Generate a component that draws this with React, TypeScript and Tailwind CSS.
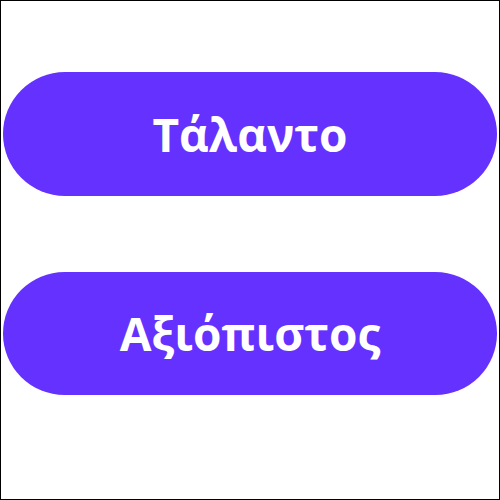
export default function App() {
  return (
    <div
      className="w-[500px] h-[500px] border border-black bg-white flex flex-col px-[2px] pt-[71px] gap-[76px]"
      style={{ fontFamily: '"Open Sans", "Noto Sans", sans-serif' }}
    >
      <button className="h-[124px] w-full rounded-full bg-[#6531ff] text-white text-[46px] font-bold flex items-center justify-center">
        Τάλαντο
      </button>
      <button className="h-[123px] w-full rounded-full bg-[#6531ff] text-white text-[46px] font-bold flex items-center justify-center">
        Αξιόπιστος
      </button>
    </div>
  );
}
